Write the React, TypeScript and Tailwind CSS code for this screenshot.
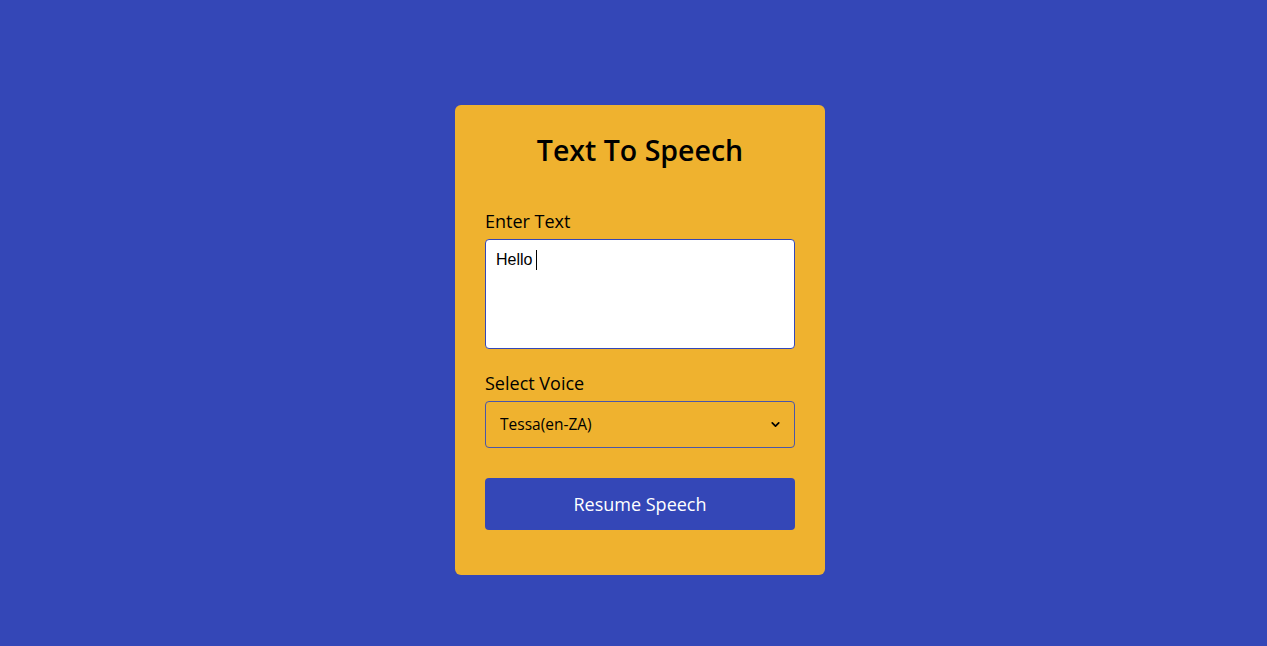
import { ChevronDown } from 'lucide-react'

export default function App() {
  return (
    <div className="min-h-[646px] w-full bg-[#3447b7] flex justify-center pt-[105px] pl-[13px] font-['Open_Sans',sans-serif]">
      <div className="w-[370px] h-[470px] bg-[#efb22f] rounded-[6px] px-[30px] pt-[25px]">
        <h1 className="text-center text-[28.5px] leading-[40px] font-semibold text-black">
          Text To Speech
        </h1>

        <label className="block mt-[38px] text-[18px] leading-[26px] text-black">Enter Text</label>
        <div className="relative mt-[5px]">
          <textarea
            readOnly
            value="Hello "
            className="block w-full h-[110px] resize-none bg-white border border-[#3447b7] rounded-[4px] px-[10px] py-[10px] text-[16px] leading-[20px] text-black outline-none font-['Liberation_Sans',sans-serif]"
          />
          <span className="absolute left-[51px] top-[11px] w-px h-[20px] bg-black" />
        </div>

        <label className="block mt-[21px] text-[18px] leading-[26px] text-black">Select Voice</label>
        <div className="relative mt-[5px]">
          <select
            defaultValue="tessa"
            className="block w-full h-[47px] appearance-none bg-transparent border border-[#4a56a8] rounded-[4px] pl-[14px] pr-[30px] text-[15.5px] text-black outline-none"
          >
            <option value="tessa">Tessa(en-ZA)</option>
          </select>
          <ChevronDown
            size={13}
            strokeWidth={3.2}
            className="absolute right-[13px] top-[17px] text-black pointer-events-none"
          />
        </div>

        <button className="mt-[30px] w-full h-[52px] bg-[#3447b7] rounded-[4px] text-white text-[18px]">
          Resume Speech
        </button>
      </div>
    </div>
  )
}
